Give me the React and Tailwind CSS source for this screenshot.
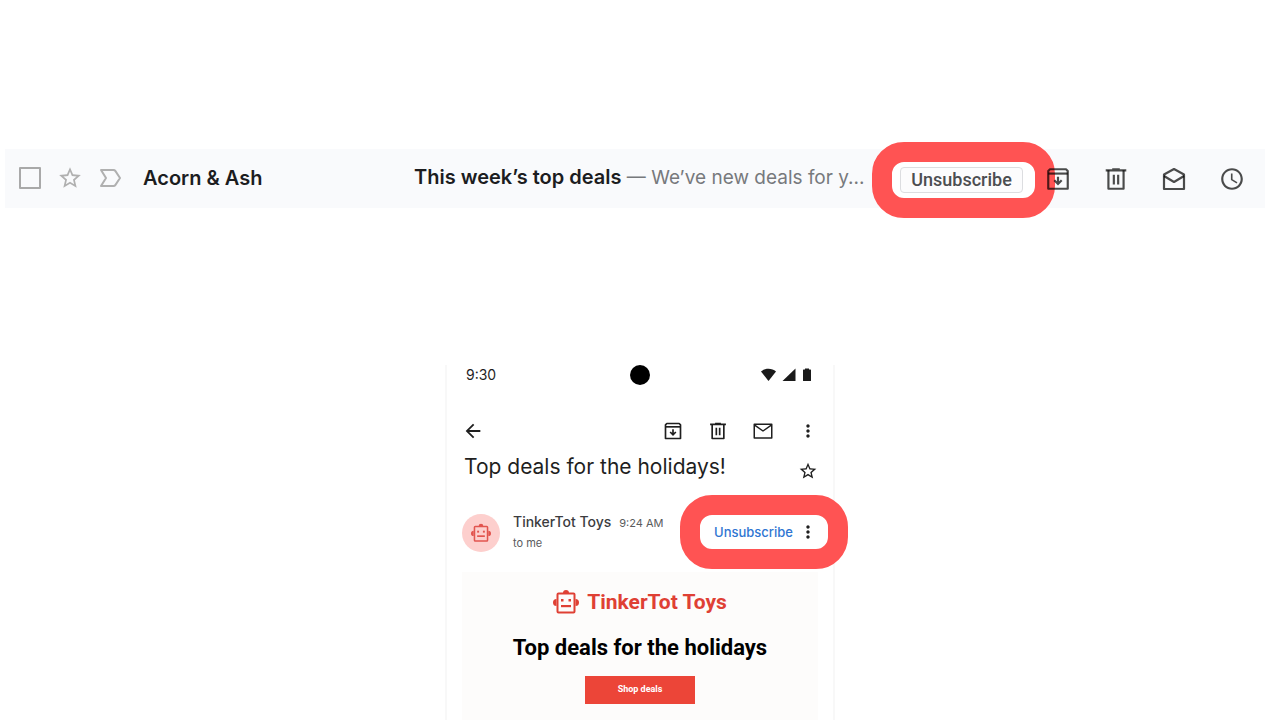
import { MdStarBorder, MdArrowBack, MdMoreVert, MdSchedule } from "react-icons/md";

function ImportantIcon({ className }) {
  return (
    <svg viewBox="0 0 26 26" className={className} fill="none" stroke="currentColor" strokeWidth="2">
      <path d="M4 5h12.5c.8 0 1.4.3 1.8.9L23 13l-4.700 7.100c-.4.6-1 .9-1.800.9H4l5-8-5-8z" strokeLinejoin="round" />
    </svg>
  );
}

function ArchiveIcon({ className }) {
  return (
    <svg viewBox="0 0 24 24" className={className} fill="none" stroke="currentColor" strokeWidth="2">
      <path d="M3 7V4.600L4.600 3h14.800L21 4.600V21H3V7z" strokeLinejoin="round" />
      <path d="M3 7h18" />
      <path d="M12 10v6M8.600 13.200L12 16.600l3.400-3.400" />
    </svg>
  );
}

function TrashIcon({ className }) {
  return (
    <svg viewBox="0 0 24 24" className={className} fill="none" stroke="currentColor" strokeWidth="2">
      <path d="M2.500 4h19M8.500 3h7" />
      <path d="M5 4v17h14V4" strokeLinejoin="round" />
      <path d="M10 8v9M14 8v9" />
    </svg>
  );
}

function OpenMailIcon({ className }) {
  return (
    <svg viewBox="0 0 26 26" className={className} fill="none" stroke="currentColor" strokeWidth="2.200" strokeLinejoin="round">
      <path d="M3 8.500L13 3l10 5.500V23H3V8.500z" />
      <path d="M3 10l10 6 10-6" />
    </svg>
  );
}

function MailIcon({ className }) {
  return (
    <svg viewBox="0 0 24 24" className={className} fill="none" stroke="currentColor" strokeWidth="1.800" strokeLinejoin="round">
      <path d="M1.500 4h21v16.500h-21z" />
      <path d="M2 5l10 7 10-7" />
    </svg>
  );
}

function RobotIcon({ className }) {
  return (
    <svg viewBox="0 0 26 26" className={className} fill="currentColor">
      <path d="M10 4a3 3 0 0 1 6 0zM3.500 10v7a3.500 3.500 0 0 1 0-7zM22.500 10v7a3.500 3.500 0 0 0 0-7z" />
      <rect x="4.500" y="4.500" width="17" height="19" rx="1" fill="none" stroke="currentColor" strokeWidth="2" />
      <rect x="8" y="10" width="2.500" height="2.500" />
      <rect x="15.500" y="10" width="2.500" height="2.500" />
      <rect x="8" y="16" width="10" height="2.200" />
    </svg>
  );
}

function StatusIcons() {
  return (
    <svg viewBox="0 0 50 16" className="h-4 w-[50px]" fill="#1a1a1a">
      <path d="M0 4.500C4 .9 11 .9 15 4.500L7.500 14z" />
      <path d="M34.500 1.500V14H21.500z" />
      <path d="M44 2.500V1.500h4v1h1.500q.5 0 .5.500v10.500q0 .5-.5.500h-7q-.5 0-.5-.500V3q0-.5.500-.500z" />
    </svg>
  );
}

const rowActions = [
  { label: "Archive", Icon: ArchiveIcon },
  { label: "Delete", Icon: TrashIcon },
  { label: "Mark as read", Icon: OpenMailIcon },
  { label: "Snooze", Icon: MdSchedule },
];

const mailActions = [
  { label: "Archive", Icon: ArchiveIcon },
  { label: "Delete", Icon: TrashIcon },
  { label: "Mark as unread", Icon: MailIcon },
  { label: "More options", Icon: MdMoreVert },
];

function InboxRow() {
  return (
    <div className="ml-[5px] mr-[15px] flex h-[59px] items-center bg-[#f9fafc] pl-3 pr-5">
      <div className="flex shrink-0 items-center gap-3.5 pb-0.5 text-[#b0b0b0]">
        <span className="flex size-[26px] items-center justify-center">
          <input type="checkbox" aria-label="Select conversation" className="size-[22px] appearance-none rounded-[1px] border-2 border-[#a9a9a9]" />
        </span>
        <button aria-label="Star"><MdStarBorder className="size-[26px]" /></button>
        <button aria-label="Important"><ImportantIcon className="size-[26px]" /></button>
      </div>
      <div className="ml-5 w-[271px] shrink-0 pb-0.5 text-xl font-semibold text-[#1c1d1f]">Acorn &amp; Ash</div>
      <div className="min-w-0 flex-1 whitespace-nowrap pb-0.5 text-[19px] leading-7 text-[#77797c]">
        <span className="text-xl font-semibold text-[#1c1d1f]">This week’s top deals</span> — We’ve new deals for y...
      </div>
      <div className="relative isolate mr-[22px] mt-0.5 shrink-0">
        <div className="absolute -bottom-[25px] -left-7 -right-8 -top-[25px] -z-10 rounded-[32px] border-[20px] border-[#ff5353] bg-white" />
        <button className="block h-[26px] w-[123px] rounded border border-[#dcdde0] bg-[#fcfcfd] font-[Roboto,sans-serif] text-lg leading-6 font-medium text-[#4c4e51]">
          Unsubscribe
        </button>
      </div>
      <div className="relative flex shrink-0 items-center gap-8 text-black/70">
        {rowActions.map(({ label, Icon }) => (
          <button key={label} aria-label={label}><Icon className="size-[26px]" /></button>
        ))}
      </div>
    </div>
  );
}

function PhoneMail() {
  return (
    <section className="mx-auto mt-[157px] flex w-[390px] flex-1 flex-col border-x-2 border-[#f8f8f8] px-[15px] text-[#1f1f1f]">
      <div className="grid h-5 grid-cols-3 items-center px-1">
        <span className="text-sm">9:30</span>
        <span className="size-5 justify-self-center rounded-full bg-black" />
        <span className="justify-self-end pr-[3px]"><StatusIcons /></span>
      </div>

      <div className="mt-9 flex h-5 items-center justify-between">
        <button aria-label="Back"><MdArrowBack className="size-[22px]" /></button>
        <div className="flex gap-[25px]">
          {mailActions.map(({ label, Icon }) => (
            <button key={label} aria-label={label}><Icon className="size-5" /></button>
          ))}
        </div>
      </div>

      <div className="mt-3 flex h-7 items-end justify-between pl-0.5">
        <h1 className="text-[21px] leading-7">Top deals for the holidays!</h1>
        <button aria-label="Star"><MdStarBorder className="size-5" /></button>
      </div>

      <div className="mt-[31px] flex h-10 items-center">
        <div className="flex size-[38px] shrink-0 items-center justify-center self-end rounded-full bg-[#fdcfcd] text-[#e2554f]">
          <RobotIcon className="size-5" />
        </div>
        <div className="ml-[13px] flex-1 whitespace-nowrap">
          <div className="flex items-baseline gap-2 leading-5">
            <span className="text-sm leading-5 font-medium text-[#3c3d3f]">TinkerTot Toys</span>
            <span className="text-[11px] leading-5 text-[#5a5b5d]">9:24 AM</span>
          </div>
          <div className="text-[11px] leading-5 text-[#5a5b5d]">to me</div>
        </div>
        <div className="relative isolate flex items-center gap-[5px]">
          <div className="absolute -bottom-[27px] -left-[34px] -right-[30px] -top-[27px] -z-10 rounded-[32px] border-[20px] border-[#ff5353] bg-white" />
          <button className="text-[13px] leading-5 font-medium text-[#2f76d2]">Unsubscribe</button>
          <button aria-label="More"><MdMoreVert className="size-5" /></button>
        </div>
      </div>

      <div className="mt-5 flex flex-1 flex-col items-center bg-[#fdfcfb] pt-[18px] pb-4 font-[Roboto,sans-serif]">
        <div className="flex h-6 items-center gap-2 text-[#df4034]">
          <RobotIcon className="size-[26px]" />
          <span className="text-[21px] leading-6 font-bold">TinkerTot Toys</span>
        </div>
        <h2 className="mt-5 text-[22px] leading-7 font-bold text-black">Top deals for the holidays</h2>
        <button className="mt-3.5 h-7 w-[110px] bg-[#ec4538] text-[9px] font-bold text-white">Shop deals</button>
      </div>
    </section>
  );
}

export default function App() {
  return (
    <main className="flex min-h-screen flex-col bg-white pt-[149px] font-[Inter,sans-serif]">
      <InboxRow />
      <PhoneMail />
    </main>
  );
}
